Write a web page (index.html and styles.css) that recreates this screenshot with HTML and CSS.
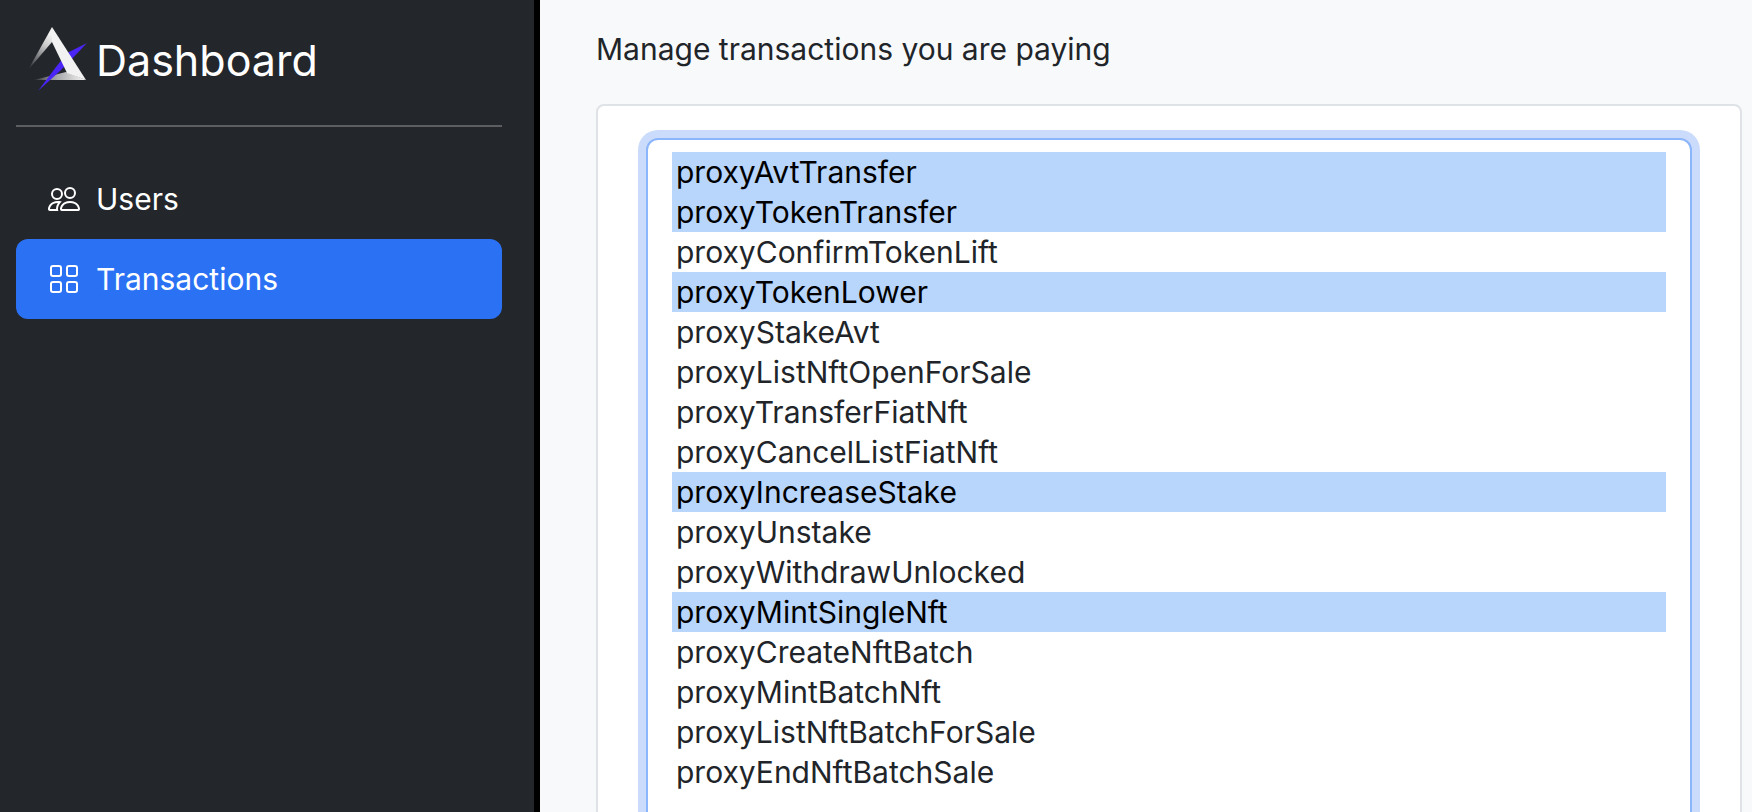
FILE: index.html
```
<!DOCTYPE html>
<html lang="en">
<head>
    <meta charset="UTF-8">
    <meta name="viewport" content="width=device-width, initial-scale=1.0">
    <title>Dashboard - Transactions</title>
    <link rel="stylesheet" href="styles.css">
</head>
<body>
    <aside class="sidebar">
        <a class="brand" href="#">
            <svg class="brand-logo" viewBox="1 1 60 66" aria-hidden="true">
                <defs>
                    <linearGradient id="fade-left" gradientUnits="userSpaceOnUse" x1="23" y1="8" x2="1" y2="43">
                        <stop offset="0" stop-color="#f2f2f2"/>
                        <stop offset=".3" stop-color="#c8c8c9"/>
                        <stop offset="1" stop-color="#c8c8c9" stop-opacity="0"/>
                    </linearGradient>
                    <linearGradient id="fade-bottom" gradientUnits="userSpaceOnUse" x1="57" y1="0" x2="5" y2="0">
                        <stop offset="0" stop-color="#f2f2f2"/>
                        <stop offset=".6" stop-color="#9a9b9d"/>
                        <stop offset="1" stop-color="#9a9b9d" stop-opacity="0"/>
                    </linearGradient>
                </defs>
                <path fill="url(#fade-left)" d="M25 1v15L1 44z"/>
                <path fill="url(#fade-bottom)" d="M7 54L39 46l20 8z"/>
                <path fill="#4a25f5" d="M60 17L40 27 29 41 11 65l22-20 9-9z"/>
                <path fill="#f2f2f2" d="M25 1l34 53L40 47 25 16z"/>
            </svg>
            <span>Dashboard</span>
        </a>
        <hr class="divider">
        <nav class="nav">
            <a class="nav-link" href="#users">
                <svg class="nav-icon" viewBox="0 0 16 16" fill="currentColor" aria-hidden="true">
                    <path d="M15 14s1 0 1-1-1-4-5-4-5 3-5 4 1 1 1 1h8Zm-7.978-1A.261.261 0 0 1 7 12.996c.001-.264.167-1.03.76-1.72C8.312 10.629 9.282 10 11 10c1.717 0 2.687.63 3.24 1.276.593.69.758 1.457.76 1.72l-.008.002a.274.274 0 0 1-.014.002H7.022ZM11 7a2 2 0 1 0 0-4 2 2 0 0 0 0 4Zm3-2a3 3 0 1 1-6 0 3 3 0 0 1 6 0ZM6.936 9.28a5.88 5.88 0 0 0-1.23-.247A7.35 7.35 0 0 0 5 9c-4 0-5 3-5 4 0 .667.333 1 1 1h4.216A2.238 2.238 0 0 1 5 13c0-1.01.377-2.042 1.09-2.904.243-.294.526-.569.846-.816ZM4.92 10A5.493 5.493 0 0 0 4 13H1c0-.26.164-1.03.76-1.724.545-.636 1.492-1.256 3.16-1.275ZM1.500 5.500a3 3 0 1 1 6 0 3 3 0 0 1-6 0Zm3-2a2 2 0 1 0 0 4 2 2 0 0 0 0-4Z"/>
                </svg>
                <span>Users</span>
            </a>
            <a class="nav-link active" href="#transactions" aria-current="page">
                <svg class="nav-icon" viewBox="0 0 16 16" fill="none" stroke="currentColor" aria-hidden="true">
                    <rect x="1.500" y="1.500" width="5" height="5" rx="1"/>
                    <rect x="9.500" y="1.500" width="5" height="5" rx="1"/>
                    <rect x="1.500" y="9.500" width="5" height="5" rx="1"/>
                    <rect x="9.500" y="9.500" width="5" height="5" rx="1"/>
                </svg>
                <span>Transactions</span>
            </a>
        </nav>
    </aside>
    <main class="content">
        <label class="title" for="transactions">Manage transactions you are paying</label>
        <div class="card">
            <select class="form-select" id="transactions" name="transactions" size="18" multiple>
                <option selected>proxyAvtTransfer</option>
                <option selected>proxyTokenTransfer</option>
                <option>proxyConfirmTokenLift</option>
                <option selected>proxyTokenLower</option>
                <option>proxyStakeAvt</option>
                <option>proxyListNftOpenForSale</option>
                <option>proxyTransferFiatNft</option>
                <option>proxyCancelListFiatNft</option>
                <option selected>proxyIncreaseStake</option>
                <option>proxyUnstake</option>
                <option>proxyWithdrawUnlocked</option>
                <option selected>proxyMintSingleNft</option>
                <option>proxyCreateNftBatch</option>
                <option>proxyMintBatchNft</option>
                <option>proxyListNftBatchForSale</option>
                <option>proxyEndNftBatchSale</option>
            </select>
        </div>
    </main>
</body>
</html>
```

FILE: styles.css
```
* {
    box-sizing: border-box;
}
body {
    margin: 0;
    height: 100vh;
    display: flex;
    font-family: Inter, "Helvetica Neue", "Liberation Sans", sans-serif;
    font-size: 30px;
    line-height: 48px;
    color: #212529;
    background-color: #f8f9fb;
}
.sidebar {
    flex: 0 0 540px;
    padding: 24px 32px 16px 16px;
    color: #fff;
    background-color: #23262b;
    border-right: 6px solid #000;
}
.brand {
    display: flex;
    align-items: center;
    gap: 8px;
    padding-left: 12px;
    font-size: 43px;
    line-height: 72px;
    color: #fff;
    text-decoration: none;
}
.brand-logo {
    width: 60px;
    height: 66px;
    overflow: visible;
}
.divider {
    height: 2px;
    margin: 29px 0 32px;
    border: 0;
    background-color: #5c5e61;
}
.nav {
    display: flex;
    flex-direction: column;
}
.nav-link {
    display: flex;
    align-items: center;
    gap: 16px;
    padding: 16px 32px;
    border-radius: 12px;
    color: #fff;
    text-decoration: none;
}
.nav-link.active {
    background-color: #2b71f4;
}
.nav-icon {
    width: 32px;
    height: 32px;
}
.content {
    flex: 1;
    min-width: 0;
    padding: 25px 10px 0 56px;
    overflow-y: auto;
    scrollbar-width: none;
}
.title {
    display: block;
    margin-bottom: 31px;
}
.card {
    padding: 32px 48px;
    background-color: #fff;
    border: 2px solid #dfe2e6;
    border-radius: 8px;
}
.form-select {
    display: block;
    width: 100%;
    padding: 12px 24px;
    font: inherit;
    line-height: 40px;
    color: #212529;
    background-color: #fff;
    border: 2px solid #8bb6fb;
    border-radius: 12px;
    box-shadow: 0 0 0 8px #cbdbfc;
    outline: 0;
    overflow: hidden;
}
.form-select option {
    min-height: 40px;
    padding: 2px 4px 0;
    line-height: 38px;
}
.form-select option:checked {
    color: #000;
    background: #b8d6fb linear-gradient(#b8d6fb, #b8d6fb);
}
```
